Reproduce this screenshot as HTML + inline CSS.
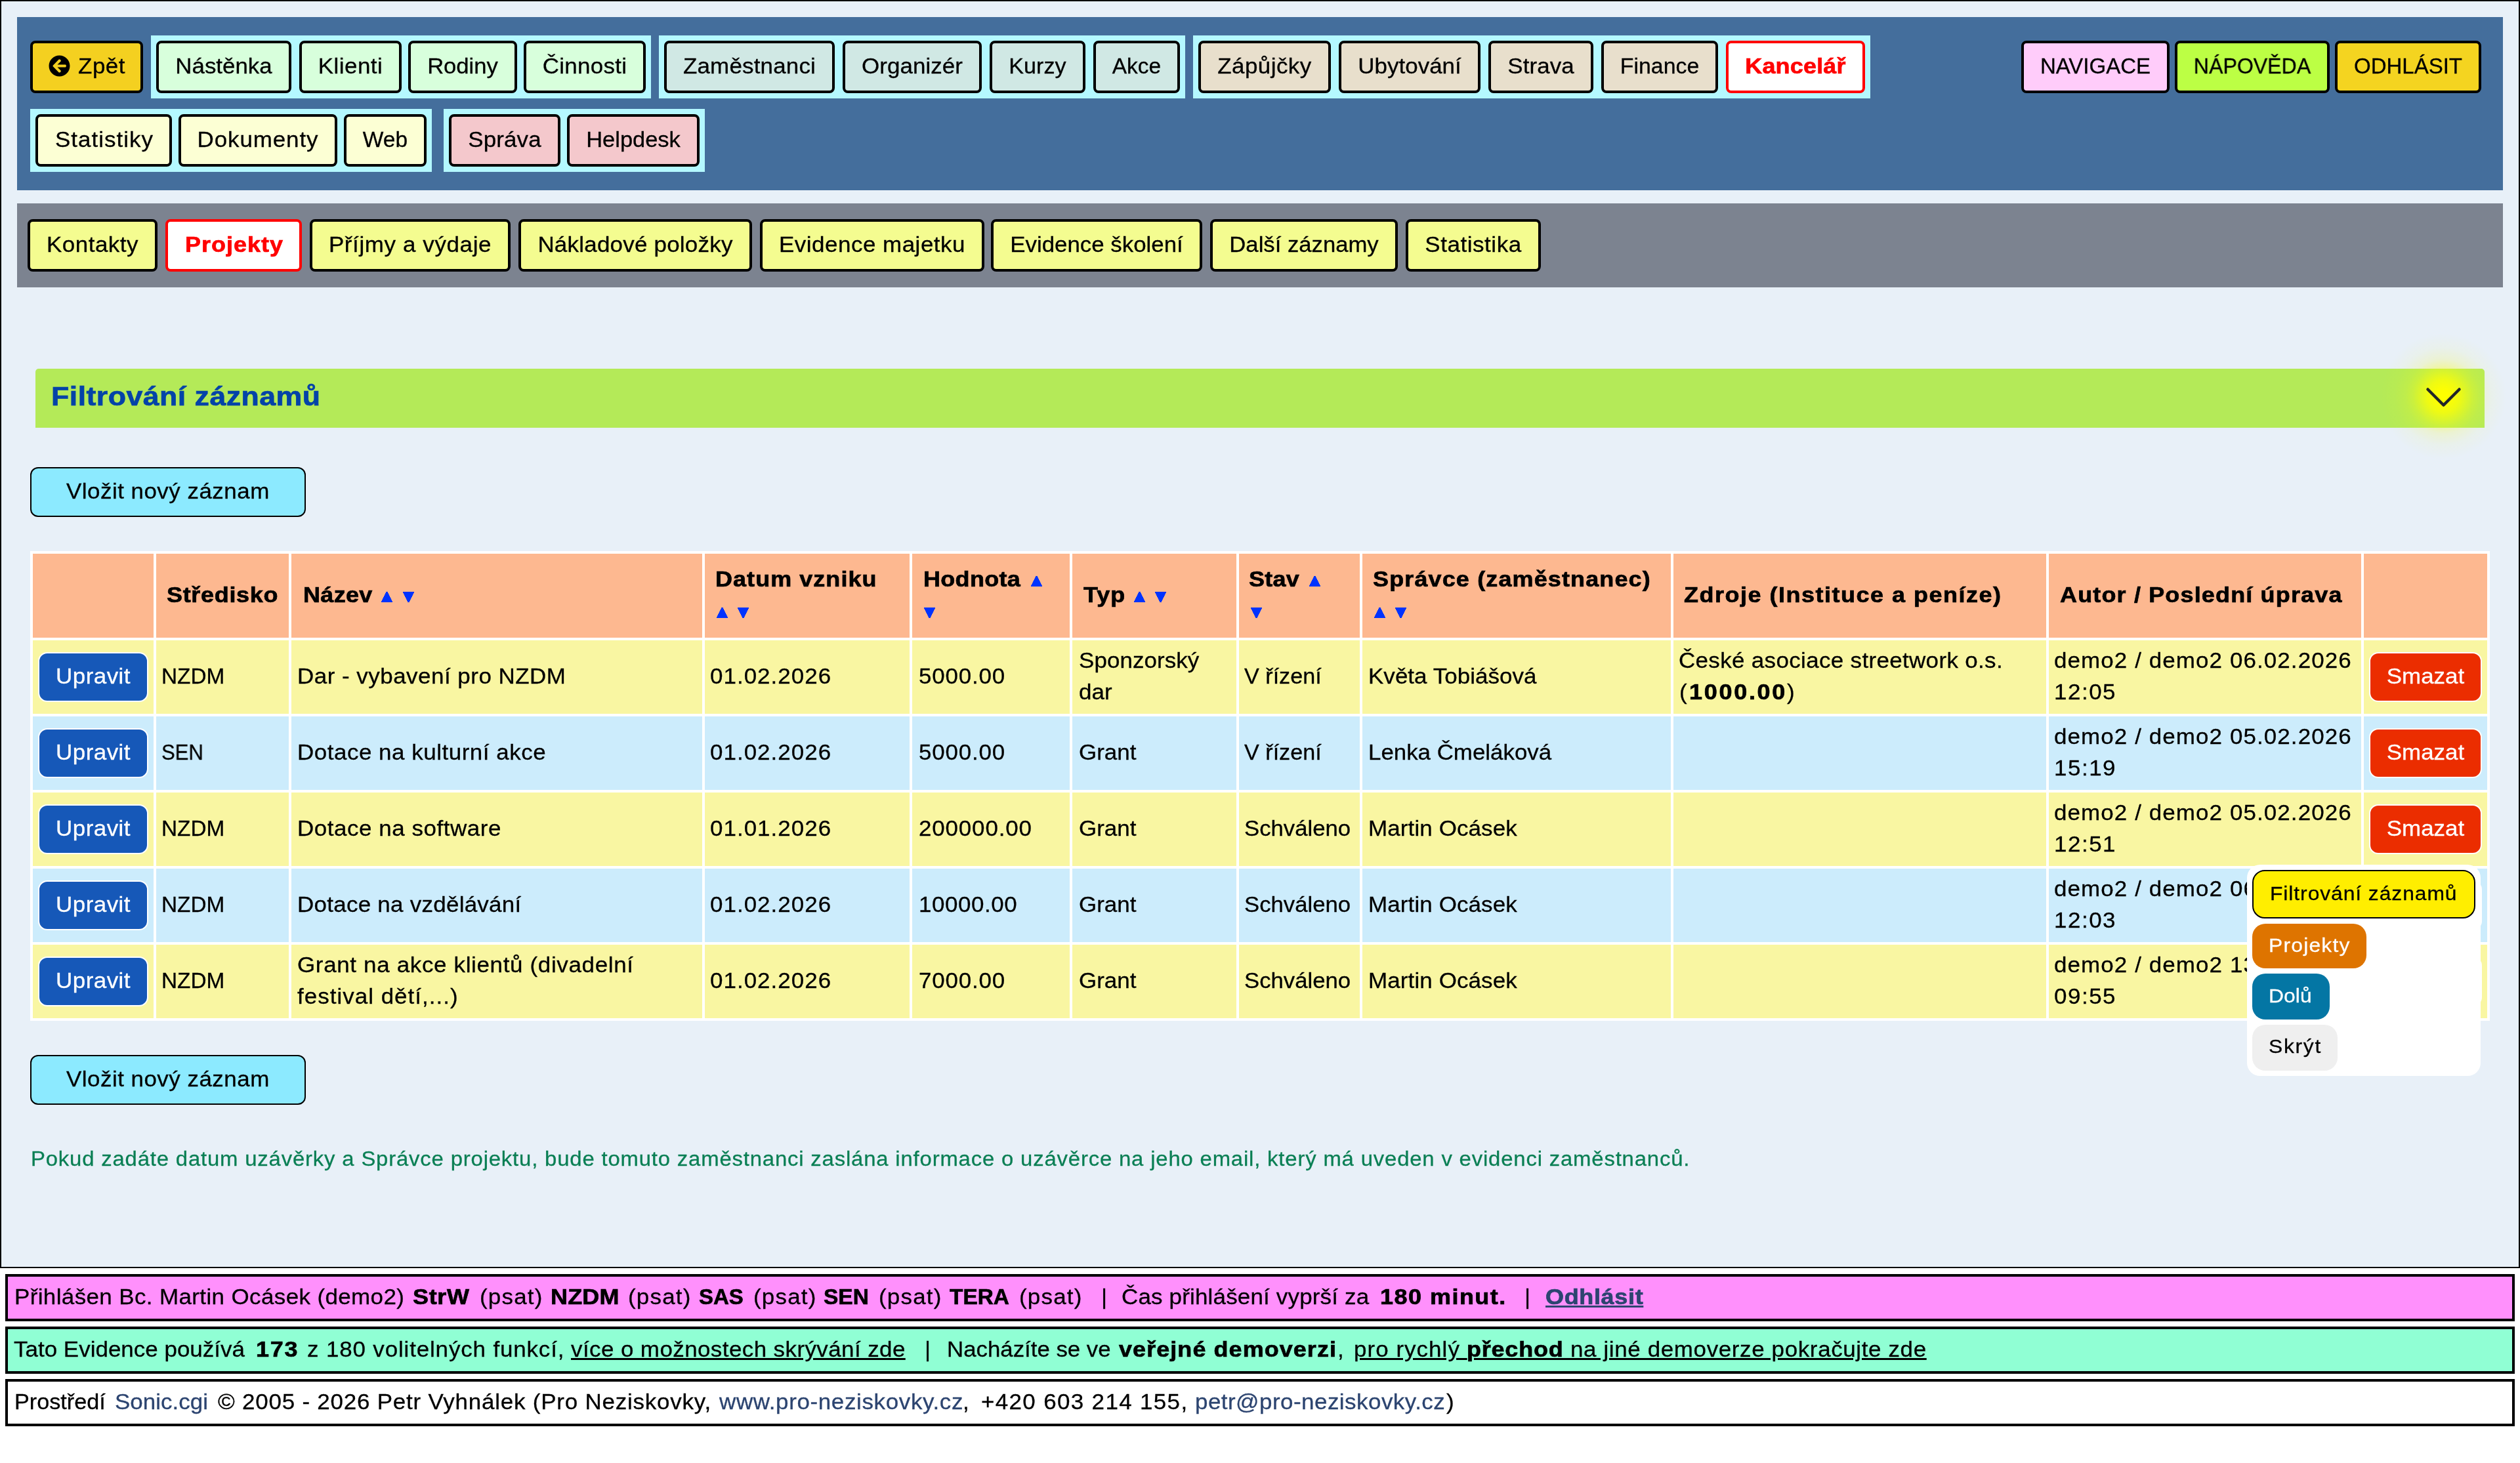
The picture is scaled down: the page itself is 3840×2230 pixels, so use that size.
<!DOCTYPE html>
<html lang="cs"><head><meta charset="utf-8"><title>Projekty</title>
<style>
html,body{margin:0;padding:0;background:#fff;}
body{width:3840px;height:2230px;position:relative;overflow:hidden;font-family:"Liberation Sans",sans-serif;color:#000;}
.b{position:absolute;box-sizing:content-box;}
.t{position:absolute;white-space:pre;-webkit-text-stroke:0.3px;will-change:transform;}
</style></head><body>
<div class="b" style="left:0;top:0;width:3836px;height:1929px;background:#e8f0f8;border:2px solid #000;"></div>
<div class="b" style="left:26px;top:26px;width:3788px;height:264px;background:#446e9c;"></div>
<div class="b" style="left:230px;top:54px;width:762px;height:96px;background:#b4f8ff;"></div>
<div class="b" style="left:1004px;top:54px;width:802px;height:96px;background:#b4f8ff;"></div>
<div class="b" style="left:1818px;top:54px;width:1032px;height:96px;background:#b4f8ff;"></div>
<div class="b" style="left:46px;top:166px;width:612px;height:96px;background:#b4f8ff;"></div>
<div class="b" style="left:676px;top:166px;width:398px;height:96px;background:#b4f8ff;"></div>
<div class="b" style="left:238px;top:62px;width:198px;height:72px;background:#d8ffdc;border:4px solid #000;border-radius:8px;"></div>
<div class="t" style="top:80.07px;font-size:33px;line-height:41px;letter-spacing:0.00px;color:#000;left:238.00px;width:206px;text-align:center;transform:scaleX(1.0571);transform-origin:50% 50%;">Nástěnka</div>
<div class="b" style="left:456px;top:62px;width:148px;height:72px;background:#d8ffdc;border:4px solid #000;border-radius:8px;"></div>
<div class="t" style="top:80.07px;font-size:33px;line-height:41px;letter-spacing:0.41px;color:#000;left:456.22px;width:156px;text-align:center;transform:scaleX(1.0600);transform-origin:50% 50%;">Klienti</div>
<div class="b" style="left:622px;top:62px;width:158px;height:72px;background:#d8ffdc;border:4px solid #000;border-radius:8px;"></div>
<div class="t" style="top:80.07px;font-size:33px;line-height:41px;letter-spacing:0.00px;color:#000;left:622.00px;width:166px;text-align:center;transform:scaleX(1.0485);transform-origin:50% 50%;">Rodiny</div>
<div class="b" style="left:798px;top:62px;width:178px;height:72px;background:#d8ffdc;border:4px solid #000;border-radius:8px;"></div>
<div class="t" style="top:80.07px;font-size:33px;line-height:41px;letter-spacing:0.25px;color:#000;left:798.13px;width:186px;text-align:center;transform:scaleX(1.0600);transform-origin:50% 50%;">Činnosti</div>
<div class="b" style="left:1012px;top:62px;width:252px;height:72px;background:#d0e8e4;border:4px solid #000;border-radius:8px;"></div>
<div class="t" style="top:80.07px;font-size:33px;line-height:41px;letter-spacing:0.16px;color:#000;left:1012.08px;width:260px;text-align:center;transform:scaleX(1.0600);transform-origin:50% 50%;">Zaměstnanci</div>
<div class="b" style="left:1284px;top:62px;width:204px;height:72px;background:#d0e8e4;border:4px solid #000;border-radius:8px;"></div>
<div class="t" style="top:80.07px;font-size:33px;line-height:41px;letter-spacing:0.04px;color:#000;left:1284.02px;width:212px;text-align:center;transform:scaleX(1.0600);transform-origin:50% 50%;">Organizér</div>
<div class="b" style="left:1508px;top:62px;width:138px;height:72px;background:#d0e8e4;border:4px solid #000;border-radius:8px;"></div>
<div class="t" style="top:80.07px;font-size:33px;line-height:41px;letter-spacing:0.00px;color:#000;left:1508.00px;width:146px;text-align:center;transform:scaleX(1.0353);transform-origin:50% 50%;">Kurzy</div>
<div class="b" style="left:1666px;top:62px;width:124px;height:72px;background:#d0e8e4;border:4px solid #000;border-radius:8px;"></div>
<div class="t" style="top:80.07px;font-size:33px;line-height:41px;letter-spacing:0.00px;color:#000;left:1666.00px;width:132px;text-align:center;transform:scaleX(1.0137);transform-origin:50% 50%;">Akce</div>
<div class="b" style="left:1826px;top:62px;width:194px;height:72px;background:#e8dfcc;border:4px solid #000;border-radius:8px;"></div>
<div class="t" style="top:80.07px;font-size:33px;line-height:41px;letter-spacing:0.41px;color:#000;left:1826.22px;width:202px;text-align:center;transform:scaleX(1.0600);transform-origin:50% 50%;">Zápůjčky</div>
<div class="b" style="left:2040px;top:62px;width:208px;height:72px;background:#e8dfcc;border:4px solid #000;border-radius:8px;"></div>
<div class="t" style="top:80.07px;font-size:33px;line-height:41px;letter-spacing:0.01px;color:#000;left:2040.00px;width:216px;text-align:center;transform:scaleX(1.0600);transform-origin:50% 50%;">Ubytování</div>
<div class="b" style="left:2268px;top:62px;width:152px;height:72px;background:#e8dfcc;border:4px solid #000;border-radius:8px;"></div>
<div class="t" style="top:80.07px;font-size:33px;line-height:41px;letter-spacing:0.05px;color:#000;left:2268.02px;width:160px;text-align:center;transform:scaleX(1.0600);transform-origin:50% 50%;">Strava</div>
<div class="b" style="left:2440px;top:62px;width:170px;height:72px;background:#e8dfcc;border:4px solid #000;border-radius:8px;"></div>
<div class="t" style="top:80.07px;font-size:33px;line-height:41px;letter-spacing:0.00px;color:#000;left:2440.00px;width:178px;text-align:center;transform:scaleX(1.0256);transform-origin:50% 50%;">Finance</div>
<div class="b" style="left:2630px;top:62px;width:204px;height:72px;background:#fff;border:4px solid #f00;border-radius:8px;"></div>
<div class="t" style="top:80.07px;font-size:33px;line-height:41px;letter-spacing:0.18px;font-weight:bold;-webkit-text-stroke:0.7px;color:#f00;left:2630.10px;width:212px;text-align:center;transform:scaleX(1.0900);transform-origin:50% 50%;">Kancelář</div>
<div class="b" style="left:3080px;top:62px;width:218px;height:72px;background:#ffccfa;border:4px solid #000;border-radius:8px;"></div>
<div class="t" style="top:80.07px;font-size:33px;line-height:41px;letter-spacing:0.00px;color:#000;left:3080.00px;width:226px;text-align:center;transform:scaleX(1.0000);transform-origin:50% 50%;">NAVIGACE</div>
<div class="b" style="left:3314px;top:62px;width:228px;height:72px;background:#bcff44;border:4px solid #000;border-radius:8px;"></div>
<div class="t" style="top:80.07px;font-size:33px;line-height:41px;letter-spacing:0.00px;color:#000;left:3314.00px;width:236px;text-align:center;transform:scaleX(0.9727);transform-origin:50% 50%;">NÁPOVĚDA</div>
<div class="b" style="left:3558px;top:62px;width:215px;height:72px;background:#f4d420;border:4px solid #000;border-radius:8px;"></div>
<div class="t" style="top:80.07px;font-size:33px;line-height:41px;letter-spacing:0.00px;color:#000;left:3558.00px;width:223px;text-align:center;transform:scaleX(1.0000);transform-origin:50% 50%;">ODHLÁSIT</div>
<div class="b" style="left:54px;top:174px;width:200px;height:72px;background:#fcffd4;border:4px solid #000;border-radius:8px;"></div>
<div class="t" style="top:192.07px;font-size:33px;line-height:41px;letter-spacing:0.95px;color:#000;left:54.50px;width:208px;text-align:center;transform:scaleX(1.0600);transform-origin:50% 50%;">Statistiky</div>
<div class="b" style="left:272px;top:174px;width:234px;height:72px;background:#fcffd4;border:4px solid #000;border-radius:8px;"></div>
<div class="t" style="top:192.07px;font-size:33px;line-height:41px;letter-spacing:0.82px;color:#000;left:272.44px;width:242px;text-align:center;transform:scaleX(1.0600);transform-origin:50% 50%;">Dokumenty</div>
<div class="b" style="left:524px;top:174px;width:118px;height:72px;background:#fcffd4;border:4px solid #000;border-radius:8px;"></div>
<div class="t" style="top:192.07px;font-size:33px;line-height:41px;letter-spacing:0.00px;color:#000;left:524.00px;width:126px;text-align:center;transform:scaleX(1.0149);transform-origin:50% 50%;">Web</div>
<div class="b" style="left:684px;top:174px;width:162px;height:72px;background:#f4c8cc;border:4px solid #000;border-radius:8px;"></div>
<div class="t" style="top:192.07px;font-size:33px;line-height:41px;letter-spacing:0.13px;color:#000;left:684.07px;width:170px;text-align:center;transform:scaleX(1.0600);transform-origin:50% 50%;">Správa</div>
<div class="b" style="left:864px;top:174px;width:194px;height:72px;background:#f4c8cc;border:4px solid #000;border-radius:8px;"></div>
<div class="t" style="top:192.07px;font-size:33px;line-height:41px;letter-spacing:0.00px;color:#000;left:864.00px;width:202px;text-align:center;transform:scaleX(1.0435);transform-origin:50% 50%;">Helpdesk</div>
<div class="b" style="left:46px;top:62px;width:164px;height:72px;background:#f4d020;border:4px solid #000;border-radius:8px;"></div>
<svg class="b" style="left:73.500px;top:83.500px" width="33" height="33" viewBox="0 0 512 512"><path fill="#000" d="M256 504C119 504 8 393 8 256S119 8 256 8s248 111 248 248-111 248-248 248zm28.9-143.6L209.4 288H392c13.3 0 24-10.700 24-24v-16c0-13.300-10.700-24-24-24H209.400l75.500-72.400c9.700-9.300 9.900-24.800.4-34.300l-11-10.900c-9.400-9.400-24.600-9.400-33.900 0L107.700 239c-9.400 9.400-9.400 24.600 0 33.900l132.700 132.700c9.400 9.400 24.600 9.400 33.900 0l11-10.900c9.500-9.500 9.300-25-.4-34.300z"/></svg>
<div class="t" style="top:80.07px;font-size:33px;line-height:41px;letter-spacing:0.48px;left:119.00px;transform:scaleX(1.0600);transform-origin:0 50%;">Zpět</div>
<div class="b" style="left:26px;top:310px;width:3788px;height:128px;background:#7c8390;"></div>
<div class="b" style="left:42px;top:334px;width:190px;height:72px;background:#f4fc90;border:4px solid #000;border-radius:8px;"></div>
<div class="t" style="top:352.07px;font-size:33px;line-height:41px;letter-spacing:0.44px;color:#000;left:42.23px;width:198px;text-align:center;transform:scaleX(1.0600);transform-origin:50% 50%;">Kontakty</div>
<div class="b" style="left:472px;top:334px;width:298px;height:72px;background:#f4fc90;border:4px solid #000;border-radius:8px;"></div>
<div class="t" style="top:352.07px;font-size:33px;line-height:41px;letter-spacing:0.57px;color:#000;left:472.30px;width:306px;text-align:center;transform:scaleX(1.0600);transform-origin:50% 50%;">Příjmy a výdaje</div>
<div class="b" style="left:790px;top:334px;width:348px;height:72px;background:#f4fc90;border:4px solid #000;border-radius:8px;"></div>
<div class="t" style="top:352.07px;font-size:33px;line-height:41px;letter-spacing:0.20px;color:#000;left:790.10px;width:356px;text-align:center;transform:scaleX(1.0600);transform-origin:50% 50%;">Nákladové položky</div>
<div class="b" style="left:1158px;top:334px;width:334px;height:72px;background:#f4fc90;border:4px solid #000;border-radius:8px;"></div>
<div class="t" style="top:352.07px;font-size:33px;line-height:41px;letter-spacing:0.46px;color:#000;left:1158.24px;width:342px;text-align:center;transform:scaleX(1.0600);transform-origin:50% 50%;">Evidence majetku</div>
<div class="b" style="left:1510px;top:334px;width:314px;height:72px;background:#f4fc90;border:4px solid #000;border-radius:8px;"></div>
<div class="t" style="top:352.07px;font-size:33px;line-height:41px;letter-spacing:0.00px;color:#000;left:1510.00px;width:322px;text-align:center;transform:scaleX(1.0560);transform-origin:50% 50%;">Evidence školení</div>
<div class="b" style="left:1844px;top:334px;width:278px;height:72px;background:#f4fc90;border:4px solid #000;border-radius:8px;"></div>
<div class="t" style="top:352.07px;font-size:33px;line-height:41px;letter-spacing:0.00px;color:#000;left:1844.00px;width:286px;text-align:center;transform:scaleX(1.0507);transform-origin:50% 50%;">Další záznamy</div>
<div class="b" style="left:2142px;top:334px;width:198px;height:72px;background:#f4fc90;border:4px solid #000;border-radius:8px;"></div>
<div class="t" style="top:352.07px;font-size:33px;line-height:41px;letter-spacing:0.51px;color:#000;left:2142.27px;width:206px;text-align:center;transform:scaleX(1.0600);transform-origin:50% 50%;">Statistika</div>
<div class="b" style="left:252px;top:334px;width:200px;height:72px;background:#fff;border:4px solid #f00;border-radius:8px;"></div>
<div class="t" style="top:352.07px;font-size:33px;line-height:41px;letter-spacing:0.94px;font-weight:bold;-webkit-text-stroke:0.7px;color:#f00;left:252.51px;width:208px;text-align:center;transform:scaleX(1.0900);transform-origin:50% 50%;">Projekty</div>
<div class="b" style="left:54px;top:562px;width:3732px;height:90px;background:#b4ea58;border-radius:5px 5px 0 0;"></div>
<div class="b" style="left:3623px;top:504px;width:200px;height:200px;background:radial-gradient(circle closest-side,rgba(255,255,0,1) 0%,rgba(255,255,0,1) 8%,rgba(255,255,0,.78) 25%,rgba(255,255,0,.52) 36%,rgba(255,255,0,.3) 46%,rgba(255,255,0,.15) 57%,rgba(255,255,0,.05) 74%,rgba(255,255,0,0) 96%);"></div>
<svg class="b" style="left:3683px;top:574px" width="80" height="60" viewBox="0 0 80 60"><path d="M16.500 19.500 L40.500 43.500 L64.500 19.500" fill="none" stroke="#212529" stroke-width="4.500" stroke-linecap="round" stroke-linejoin="round"/></svg>
<div class="t" style="top:579.79px;font-size:41px;line-height:49px;letter-spacing:0.42px;font-weight:bold;-webkit-text-stroke:0.7px;color:#0443a8;left:78.00px;transform:scaleX(1.0900);transform-origin:0 50%;">Filtrování záznamů</div>
<div class="b" style="left:46px;top:712px;width:416px;height:72px;background:#8ceaff;border:2px solid #000;border-radius:12px;"></div>
<div class="t" style="top:728.07px;font-size:33px;line-height:41px;letter-spacing:0.44px;left:101.00px;transform:scaleX(1.0600);transform-origin:0 50%;">Vložit nový záznam</div>
<div class="b" style="left:46px;top:1608px;width:416px;height:72px;background:#8ceaff;border:2px solid #000;border-radius:12px;"></div>
<div class="t" style="top:1624.07px;font-size:33px;line-height:41px;letter-spacing:0.44px;left:101.00px;transform:scaleX(1.0600);transform-origin:0 50%;">Vložit nový záznam</div>
<div class="b" style="left:46px;top:840px;width:3748px;height:716px;background:#fff;"></div>
<div class="b" style="left:50px;top:844px;width:184px;height:128px;background:#fdb890;"></div>
<div class="b" style="left:238px;top:844px;width:202px;height:128px;background:#fdb890;"></div>
<div class="b" style="left:444px;top:844px;width:626px;height:128px;background:#fdb890;"></div>
<div class="b" style="left:1074px;top:844px;width:312px;height:128px;background:#fdb890;"></div>
<div class="b" style="left:1390px;top:844px;width:240px;height:128px;background:#fdb890;"></div>
<div class="b" style="left:1634px;top:844px;width:250px;height:128px;background:#fdb890;"></div>
<div class="b" style="left:1888px;top:844px;width:184px;height:128px;background:#fdb890;"></div>
<div class="b" style="left:2076px;top:844px;width:470px;height:128px;background:#fdb890;"></div>
<div class="b" style="left:2550px;top:844px;width:568px;height:128px;background:#fdb890;"></div>
<div class="b" style="left:3122px;top:844px;width:476px;height:128px;background:#fdb890;"></div>
<div class="b" style="left:3602px;top:844px;width:188px;height:128px;background:#fdb890;"></div>
<div class="b" style="left:50px;top:976px;width:184px;height:112px;background:#f9f6a2;"></div>
<div class="b" style="left:238px;top:976px;width:202px;height:112px;background:#f9f6a2;"></div>
<div class="b" style="left:444px;top:976px;width:626px;height:112px;background:#f9f6a2;"></div>
<div class="b" style="left:1074px;top:976px;width:312px;height:112px;background:#f9f6a2;"></div>
<div class="b" style="left:1390px;top:976px;width:240px;height:112px;background:#f9f6a2;"></div>
<div class="b" style="left:1634px;top:976px;width:250px;height:112px;background:#f9f6a2;"></div>
<div class="b" style="left:1888px;top:976px;width:184px;height:112px;background:#f9f6a2;"></div>
<div class="b" style="left:2076px;top:976px;width:470px;height:112px;background:#f9f6a2;"></div>
<div class="b" style="left:2550px;top:976px;width:568px;height:112px;background:#f9f6a2;"></div>
<div class="b" style="left:3122px;top:976px;width:476px;height:112px;background:#f9f6a2;"></div>
<div class="b" style="left:3602px;top:976px;width:188px;height:112px;background:#f9f6a2;"></div>
<div class="b" style="left:50px;top:1092px;width:184px;height:112px;background:#ccecfc;"></div>
<div class="b" style="left:238px;top:1092px;width:202px;height:112px;background:#ccecfc;"></div>
<div class="b" style="left:444px;top:1092px;width:626px;height:112px;background:#ccecfc;"></div>
<div class="b" style="left:1074px;top:1092px;width:312px;height:112px;background:#ccecfc;"></div>
<div class="b" style="left:1390px;top:1092px;width:240px;height:112px;background:#ccecfc;"></div>
<div class="b" style="left:1634px;top:1092px;width:250px;height:112px;background:#ccecfc;"></div>
<div class="b" style="left:1888px;top:1092px;width:184px;height:112px;background:#ccecfc;"></div>
<div class="b" style="left:2076px;top:1092px;width:470px;height:112px;background:#ccecfc;"></div>
<div class="b" style="left:2550px;top:1092px;width:568px;height:112px;background:#ccecfc;"></div>
<div class="b" style="left:3122px;top:1092px;width:476px;height:112px;background:#ccecfc;"></div>
<div class="b" style="left:3602px;top:1092px;width:188px;height:112px;background:#ccecfc;"></div>
<div class="b" style="left:50px;top:1208px;width:184px;height:112px;background:#f9f6a2;"></div>
<div class="b" style="left:238px;top:1208px;width:202px;height:112px;background:#f9f6a2;"></div>
<div class="b" style="left:444px;top:1208px;width:626px;height:112px;background:#f9f6a2;"></div>
<div class="b" style="left:1074px;top:1208px;width:312px;height:112px;background:#f9f6a2;"></div>
<div class="b" style="left:1390px;top:1208px;width:240px;height:112px;background:#f9f6a2;"></div>
<div class="b" style="left:1634px;top:1208px;width:250px;height:112px;background:#f9f6a2;"></div>
<div class="b" style="left:1888px;top:1208px;width:184px;height:112px;background:#f9f6a2;"></div>
<div class="b" style="left:2076px;top:1208px;width:470px;height:112px;background:#f9f6a2;"></div>
<div class="b" style="left:2550px;top:1208px;width:568px;height:112px;background:#f9f6a2;"></div>
<div class="b" style="left:3122px;top:1208px;width:476px;height:112px;background:#f9f6a2;"></div>
<div class="b" style="left:3602px;top:1208px;width:188px;height:112px;background:#f9f6a2;"></div>
<div class="b" style="left:50px;top:1324px;width:184px;height:112px;background:#ccecfc;"></div>
<div class="b" style="left:238px;top:1324px;width:202px;height:112px;background:#ccecfc;"></div>
<div class="b" style="left:444px;top:1324px;width:626px;height:112px;background:#ccecfc;"></div>
<div class="b" style="left:1074px;top:1324px;width:312px;height:112px;background:#ccecfc;"></div>
<div class="b" style="left:1390px;top:1324px;width:240px;height:112px;background:#ccecfc;"></div>
<div class="b" style="left:1634px;top:1324px;width:250px;height:112px;background:#ccecfc;"></div>
<div class="b" style="left:1888px;top:1324px;width:184px;height:112px;background:#ccecfc;"></div>
<div class="b" style="left:2076px;top:1324px;width:470px;height:112px;background:#ccecfc;"></div>
<div class="b" style="left:2550px;top:1324px;width:568px;height:112px;background:#ccecfc;"></div>
<div class="b" style="left:3122px;top:1324px;width:476px;height:112px;background:#ccecfc;"></div>
<div class="b" style="left:3602px;top:1324px;width:188px;height:112px;background:#ccecfc;"></div>
<div class="b" style="left:50px;top:1440px;width:184px;height:112px;background:#f9f6a2;"></div>
<div class="b" style="left:238px;top:1440px;width:202px;height:112px;background:#f9f6a2;"></div>
<div class="b" style="left:444px;top:1440px;width:626px;height:112px;background:#f9f6a2;"></div>
<div class="b" style="left:1074px;top:1440px;width:312px;height:112px;background:#f9f6a2;"></div>
<div class="b" style="left:1390px;top:1440px;width:240px;height:112px;background:#f9f6a2;"></div>
<div class="b" style="left:1634px;top:1440px;width:250px;height:112px;background:#f9f6a2;"></div>
<div class="b" style="left:1888px;top:1440px;width:184px;height:112px;background:#f9f6a2;"></div>
<div class="b" style="left:2076px;top:1440px;width:470px;height:112px;background:#f9f6a2;"></div>
<div class="b" style="left:2550px;top:1440px;width:568px;height:112px;background:#f9f6a2;"></div>
<div class="b" style="left:3122px;top:1440px;width:476px;height:112px;background:#f9f6a2;"></div>
<div class="b" style="left:3602px;top:1440px;width:188px;height:112px;background:#f9f6a2;"></div>
<div class="t" style="top:886.07px;font-size:33px;line-height:41px;letter-spacing:0.63px;font-weight:bold;-webkit-text-stroke:0.7px;left:254.00px;transform:scaleX(1.0900);transform-origin:0 50%;">Středisko</div>
<div class="t" style="top:886.07px;font-size:33px;line-height:41px;letter-spacing:0.31px;font-weight:bold;-webkit-text-stroke:0.7px;left:462.00px;transform:scaleX(1.0900);transform-origin:0 50%;">Název</div>
<div class="t" style="top:862.07px;font-size:33px;line-height:41px;letter-spacing:0.97px;font-weight:bold;-webkit-text-stroke:0.7px;left:1090.00px;transform:scaleX(1.0900);transform-origin:0 50%;">Datum vzniku</div>
<div class="t" style="top:862.07px;font-size:33px;line-height:41px;letter-spacing:0.30px;font-weight:bold;-webkit-text-stroke:0.7px;left:1407.00px;transform:scaleX(1.0900);transform-origin:0 50%;">Hodnota</div>
<div class="t" style="top:886.07px;font-size:33px;line-height:41px;letter-spacing:0.90px;font-weight:bold;-webkit-text-stroke:0.7px;left:1651.00px;transform:scaleX(1.0900);transform-origin:0 50%;">Typ</div>
<div class="t" style="top:862.07px;font-size:33px;line-height:41px;letter-spacing:0.21px;font-weight:bold;-webkit-text-stroke:0.7px;left:1903.00px;transform:scaleX(1.0900);transform-origin:0 50%;">Stav</div>
<div class="t" style="top:862.07px;font-size:33px;line-height:41px;letter-spacing:1.05px;font-weight:bold;-webkit-text-stroke:0.7px;left:2092.00px;transform:scaleX(1.0900);transform-origin:0 50%;">Správce (zaměstnanec)</div>
<div class="t" style="top:886.07px;font-size:33px;line-height:41px;letter-spacing:1.39px;font-weight:bold;-webkit-text-stroke:0.7px;left:2566.00px;transform:scaleX(1.0900);transform-origin:0 50%;">Zdroje (Instituce a peníze)</div>
<div class="t" style="top:886.07px;font-size:33px;line-height:41px;letter-spacing:1.07px;font-weight:bold;-webkit-text-stroke:0.7px;left:3139.00px;transform:scaleX(1.0900);transform-origin:0 50%;">Autor / Poslední úprava</div>
<svg class="b" style="left:0;top:0" width="3840" height="1000" fill="#0033ff" shape-rendering="crispEdges"><rect x="588.0" y="902" width="3" height="2"/><rect x="587.0" y="904" width="5" height="2"/><rect x="586.0" y="906" width="7" height="2"/><rect x="585.0" y="908" width="9" height="2"/><rect x="584.0" y="910" width="11" height="2"/><rect x="583.0" y="912" width="13" height="2"/><rect x="582.0" y="914" width="15" height="2"/><rect x="581.0" y="916" width="17" height="2"/><rect x="621.0" y="916" width="3" height="2"/><rect x="620.0" y="914" width="5" height="2"/><rect x="619.0" y="912" width="7" height="2"/><rect x="618.0" y="910" width="9" height="2"/><rect x="617.0" y="908" width="11" height="2"/><rect x="616.0" y="906" width="13" height="2"/><rect x="615.0" y="904" width="15" height="2"/><rect x="614.0" y="902" width="17" height="2"/><rect x="1099.0" y="926" width="3" height="2"/><rect x="1098.0" y="928" width="5" height="2"/><rect x="1097.0" y="930" width="7" height="2"/><rect x="1096.0" y="932" width="9" height="2"/><rect x="1095.0" y="934" width="11" height="2"/><rect x="1094.0" y="936" width="13" height="2"/><rect x="1093.0" y="938" width="15" height="2"/><rect x="1092.0" y="940" width="17" height="2"/><rect x="1131.0" y="940" width="3" height="2"/><rect x="1130.0" y="938" width="5" height="2"/><rect x="1129.0" y="936" width="7" height="2"/><rect x="1128.0" y="934" width="9" height="2"/><rect x="1127.0" y="932" width="11" height="2"/><rect x="1126.0" y="930" width="13" height="2"/><rect x="1125.0" y="928" width="15" height="2"/><rect x="1124.0" y="926" width="17" height="2"/><rect x="1578.0" y="878" width="3" height="2"/><rect x="1577.0" y="880" width="5" height="2"/><rect x="1576.0" y="882" width="7" height="2"/><rect x="1575.0" y="884" width="9" height="2"/><rect x="1574.0" y="886" width="11" height="2"/><rect x="1573.0" y="888" width="13" height="2"/><rect x="1572.0" y="890" width="15" height="2"/><rect x="1571.0" y="892" width="17" height="2"/><rect x="1415.0" y="940" width="3" height="2"/><rect x="1414.0" y="938" width="5" height="2"/><rect x="1413.0" y="936" width="7" height="2"/><rect x="1412.0" y="934" width="9" height="2"/><rect x="1411.0" y="932" width="11" height="2"/><rect x="1410.0" y="930" width="13" height="2"/><rect x="1409.0" y="928" width="15" height="2"/><rect x="1408.0" y="926" width="17" height="2"/><rect x="1735.0" y="902" width="3" height="2"/><rect x="1734.0" y="904" width="5" height="2"/><rect x="1733.0" y="906" width="7" height="2"/><rect x="1732.0" y="908" width="9" height="2"/><rect x="1731.0" y="910" width="11" height="2"/><rect x="1730.0" y="912" width="13" height="2"/><rect x="1729.0" y="914" width="15" height="2"/><rect x="1728.0" y="916" width="17" height="2"/><rect x="1767.0" y="916" width="3" height="2"/><rect x="1766.0" y="914" width="5" height="2"/><rect x="1765.0" y="912" width="7" height="2"/><rect x="1764.0" y="910" width="9" height="2"/><rect x="1763.0" y="908" width="11" height="2"/><rect x="1762.0" y="906" width="13" height="2"/><rect x="1761.0" y="904" width="15" height="2"/><rect x="1760.0" y="902" width="17" height="2"/><rect x="2002.0" y="878" width="3" height="2"/><rect x="2001.0" y="880" width="5" height="2"/><rect x="2000.0" y="882" width="7" height="2"/><rect x="1999.0" y="884" width="9" height="2"/><rect x="1998.0" y="886" width="11" height="2"/><rect x="1997.0" y="888" width="13" height="2"/><rect x="1996.0" y="890" width="15" height="2"/><rect x="1995.0" y="892" width="17" height="2"/><rect x="1913.0" y="940" width="3" height="2"/><rect x="1912.0" y="938" width="5" height="2"/><rect x="1911.0" y="936" width="7" height="2"/><rect x="1910.0" y="934" width="9" height="2"/><rect x="1909.0" y="932" width="11" height="2"/><rect x="1908.0" y="930" width="13" height="2"/><rect x="1907.0" y="928" width="15" height="2"/><rect x="1906.0" y="926" width="17" height="2"/><rect x="2101.0" y="926" width="3" height="2"/><rect x="2100.0" y="928" width="5" height="2"/><rect x="2099.0" y="930" width="7" height="2"/><rect x="2098.0" y="932" width="9" height="2"/><rect x="2097.0" y="934" width="11" height="2"/><rect x="2096.0" y="936" width="13" height="2"/><rect x="2095.0" y="938" width="15" height="2"/><rect x="2094.0" y="940" width="17" height="2"/><rect x="2133.0" y="940" width="3" height="2"/><rect x="2132.0" y="938" width="5" height="2"/><rect x="2131.0" y="936" width="7" height="2"/><rect x="2130.0" y="934" width="9" height="2"/><rect x="2129.0" y="932" width="11" height="2"/><rect x="2128.0" y="930" width="13" height="2"/><rect x="2127.0" y="928" width="15" height="2"/><rect x="2126.0" y="926" width="17" height="2"/></svg>
<div class="b" style="left:58px;top:994px;width:164px;height:72px;background:#1658b8;border:2px solid #fff;border-radius:14px;"></div>
<div class="t" style="top:1010.07px;font-size:33px;line-height:41px;letter-spacing:0.42px;color:#fff;left:60.23px;width:164px;text-align:center;transform:scaleX(1.0600);transform-origin:50% 50%;">Upravit</div>
<div class="t" style="top:1010.07px;font-size:33px;line-height:41px;letter-spacing:0.00px;left:246.00px;transform:scaleX(1.0105);transform-origin:0 50%;">NZDM</div>
<div class="t" style="top:1010.07px;font-size:33px;line-height:41px;letter-spacing:0.45px;left:453.00px;transform:scaleX(1.0600);transform-origin:0 50%;">Dar - vybavení pro NZDM</div>
<div class="t" style="top:1010.07px;font-size:33px;line-height:41px;letter-spacing:0.95px;left:1082.00px;transform:scaleX(1.0600);transform-origin:0 50%;">01.02.2026</div>
<div class="t" style="top:1010.07px;font-size:33px;line-height:41px;letter-spacing:0.76px;left:1400.00px;transform:scaleX(1.0600);transform-origin:0 50%;">5000.00</div>
<div class="t" style="top:986.07px;font-size:33px;line-height:41px;letter-spacing:0.06px;left:1644.00px;transform:scaleX(1.0600);transform-origin:0 50%;">Sponzorský</div>
<div class="t" style="top:1034.07px;font-size:33px;line-height:41px;letter-spacing:0.06px;left:1644.00px;transform:scaleX(1.0600);transform-origin:0 50%;">dar</div>
<div class="t" style="top:1010.07px;font-size:33px;line-height:41px;letter-spacing:0.00px;left:1896.00px;transform:scaleX(1.0348);transform-origin:0 50%;">V řízení</div>
<div class="t" style="top:1010.07px;font-size:33px;line-height:41px;letter-spacing:0.03px;left:2085.00px;transform:scaleX(1.0600);transform-origin:0 50%;">Květa Tobiášová</div>
<div class="t" style="top:986.07px;font-size:33px;line-height:41px;letter-spacing:0.31px;left:2558.00px;transform:scaleX(1.0600);transform-origin:0 50%;">České asociace streetwork o.s.</div>
<div class="t" style="top:1034.07px;font-size:33px;line-height:41px;letter-spacing:0.63px;left:2559.00px;transform:scaleX(1.0600);transform-origin:0 50%;">(</div>
<div class="t" style="top:1034.07px;font-size:33px;line-height:41px;letter-spacing:2.49px;font-weight:bold;-webkit-text-stroke:0.7px;left:2574.00px;transform:scaleX(1.0900);transform-origin:0 50%;">1000.00</div>
<div class="t" style="top:1034.07px;font-size:33px;line-height:41px;letter-spacing:0.63px;left:2723.00px;transform:scaleX(1.0600);transform-origin:0 50%;">)</div>
<div class="t" style="top:986.07px;font-size:33px;line-height:41px;letter-spacing:1.02px;left:3130.00px;transform:scaleX(1.0600);transform-origin:0 50%;">demo2 / demo2 06.02.2026</div>
<div class="t" style="top:1034.07px;font-size:33px;line-height:41px;letter-spacing:1.42px;left:3130.00px;transform:scaleX(1.0600);transform-origin:0 50%;">12:05</div>
<div class="b" style="left:3610px;top:994px;width:168px;height:72px;background:#eb2d00;border:2px solid #fff;border-radius:14px;"></div>
<div class="t" style="top:1010.07px;font-size:33px;line-height:41px;letter-spacing:0.00px;color:#fff;left:3612.00px;width:168px;text-align:center;transform:scaleX(1.0589);transform-origin:50% 50%;">Smazat</div>
<div class="b" style="left:58px;top:1110px;width:164px;height:72px;background:#1658b8;border:2px solid #fff;border-radius:14px;"></div>
<div class="t" style="top:1126.07px;font-size:33px;line-height:41px;letter-spacing:0.42px;color:#fff;left:60.23px;width:164px;text-align:center;transform:scaleX(1.0600);transform-origin:50% 50%;">Upravit</div>
<div class="t" style="top:1126.07px;font-size:33px;line-height:41px;letter-spacing:0.00px;left:246.00px;transform:scaleX(0.9412);transform-origin:0 50%;">SEN</div>
<div class="t" style="top:1126.07px;font-size:33px;line-height:41px;letter-spacing:0.48px;left:453.00px;transform:scaleX(1.0600);transform-origin:0 50%;">Dotace na kulturní akce</div>
<div class="t" style="top:1126.07px;font-size:33px;line-height:41px;letter-spacing:0.95px;left:1082.00px;transform:scaleX(1.0600);transform-origin:0 50%;">01.02.2026</div>
<div class="t" style="top:1126.07px;font-size:33px;line-height:41px;letter-spacing:0.76px;left:1400.00px;transform:scaleX(1.0600);transform-origin:0 50%;">5000.00</div>
<div class="t" style="top:1126.07px;font-size:33px;line-height:41px;letter-spacing:0.00px;left:1644.00px;transform:scaleX(1.0600);transform-origin:0 50%;">Grant</div>
<div class="t" style="top:1126.07px;font-size:33px;line-height:41px;letter-spacing:0.00px;left:1896.00px;transform:scaleX(1.0348);transform-origin:0 50%;">V řízení</div>
<div class="t" style="top:1126.07px;font-size:33px;line-height:41px;letter-spacing:0.00px;left:2085.00px;transform:scaleX(1.0566);transform-origin:0 50%;">Lenka Čmeláková</div>
<div class="t" style="top:1102.07px;font-size:33px;line-height:41px;letter-spacing:1.02px;left:3130.00px;transform:scaleX(1.0600);transform-origin:0 50%;">demo2 / demo2 05.02.2026</div>
<div class="t" style="top:1150.07px;font-size:33px;line-height:41px;letter-spacing:1.42px;left:3130.00px;transform:scaleX(1.0600);transform-origin:0 50%;">15:19</div>
<div class="b" style="left:3610px;top:1110px;width:168px;height:72px;background:#eb2d00;border:2px solid #fff;border-radius:14px;"></div>
<div class="t" style="top:1126.07px;font-size:33px;line-height:41px;letter-spacing:0.00px;color:#fff;left:3612.00px;width:168px;text-align:center;transform:scaleX(1.0589);transform-origin:50% 50%;">Smazat</div>
<div class="b" style="left:58px;top:1226px;width:164px;height:72px;background:#1658b8;border:2px solid #fff;border-radius:14px;"></div>
<div class="t" style="top:1242.07px;font-size:33px;line-height:41px;letter-spacing:0.42px;color:#fff;left:60.23px;width:164px;text-align:center;transform:scaleX(1.0600);transform-origin:50% 50%;">Upravit</div>
<div class="t" style="top:1242.07px;font-size:33px;line-height:41px;letter-spacing:0.00px;left:246.00px;transform:scaleX(1.0105);transform-origin:0 50%;">NZDM</div>
<div class="t" style="top:1242.07px;font-size:33px;line-height:41px;letter-spacing:0.50px;left:453.00px;transform:scaleX(1.0600);transform-origin:0 50%;">Dotace na software</div>
<div class="t" style="top:1242.07px;font-size:33px;line-height:41px;letter-spacing:0.95px;left:1082.00px;transform:scaleX(1.0600);transform-origin:0 50%;">01.01.2026</div>
<div class="t" style="top:1242.07px;font-size:33px;line-height:41px;letter-spacing:0.78px;left:1400.00px;transform:scaleX(1.0600);transform-origin:0 50%;">200000.00</div>
<div class="t" style="top:1242.07px;font-size:33px;line-height:41px;letter-spacing:0.00px;left:1644.00px;transform:scaleX(1.0600);transform-origin:0 50%;">Grant</div>
<div class="t" style="top:1242.07px;font-size:33px;line-height:41px;letter-spacing:0.00px;left:1896.00px;transform:scaleX(1.0519);transform-origin:0 50%;">Schváleno</div>
<div class="t" style="top:1242.07px;font-size:33px;line-height:41px;letter-spacing:0.10px;left:2085.00px;transform:scaleX(1.0600);transform-origin:0 50%;">Martin Ocásek</div>
<div class="t" style="top:1218.07px;font-size:33px;line-height:41px;letter-spacing:1.02px;left:3130.00px;transform:scaleX(1.0600);transform-origin:0 50%;">demo2 / demo2 05.02.2026</div>
<div class="t" style="top:1266.07px;font-size:33px;line-height:41px;letter-spacing:1.42px;left:3130.00px;transform:scaleX(1.0600);transform-origin:0 50%;">12:51</div>
<div class="b" style="left:3610px;top:1226px;width:168px;height:72px;background:#eb2d00;border:2px solid #fff;border-radius:14px;"></div>
<div class="t" style="top:1242.07px;font-size:33px;line-height:41px;letter-spacing:0.00px;color:#fff;left:3612.00px;width:168px;text-align:center;transform:scaleX(1.0589);transform-origin:50% 50%;">Smazat</div>
<div class="b" style="left:58px;top:1342px;width:164px;height:72px;background:#1658b8;border:2px solid #fff;border-radius:14px;"></div>
<div class="t" style="top:1358.07px;font-size:33px;line-height:41px;letter-spacing:0.42px;color:#fff;left:60.23px;width:164px;text-align:center;transform:scaleX(1.0600);transform-origin:50% 50%;">Upravit</div>
<div class="t" style="top:1358.07px;font-size:33px;line-height:41px;letter-spacing:0.00px;left:246.00px;transform:scaleX(1.0105);transform-origin:0 50%;">NZDM</div>
<div class="t" style="top:1358.07px;font-size:33px;line-height:41px;letter-spacing:0.24px;left:453.00px;transform:scaleX(1.0600);transform-origin:0 50%;">Dotace na vzdělávání</div>
<div class="t" style="top:1358.07px;font-size:33px;line-height:41px;letter-spacing:0.95px;left:1082.00px;transform:scaleX(1.0600);transform-origin:0 50%;">01.02.2026</div>
<div class="t" style="top:1358.07px;font-size:33px;line-height:41px;letter-spacing:0.50px;left:1400.00px;transform:scaleX(1.0600);transform-origin:0 50%;">10000.00</div>
<div class="t" style="top:1358.07px;font-size:33px;line-height:41px;letter-spacing:0.00px;left:1644.00px;transform:scaleX(1.0600);transform-origin:0 50%;">Grant</div>
<div class="t" style="top:1358.07px;font-size:33px;line-height:41px;letter-spacing:0.00px;left:1896.00px;transform:scaleX(1.0519);transform-origin:0 50%;">Schváleno</div>
<div class="t" style="top:1358.07px;font-size:33px;line-height:41px;letter-spacing:0.10px;left:2085.00px;transform:scaleX(1.0600);transform-origin:0 50%;">Martin Ocásek</div>
<div class="t" style="top:1334.07px;font-size:33px;line-height:41px;letter-spacing:1.02px;left:3130.00px;transform:scaleX(1.0600);transform-origin:0 50%;">demo2 / demo2 06.02.2026</div>
<div class="t" style="top:1382.07px;font-size:33px;line-height:41px;letter-spacing:1.42px;left:3130.00px;transform:scaleX(1.0600);transform-origin:0 50%;">12:03</div>
<div class="b" style="left:3610px;top:1342px;width:168px;height:72px;background:#eb2d00;border:2px solid #fff;border-radius:14px;"></div>
<div class="t" style="top:1358.07px;font-size:33px;line-height:41px;letter-spacing:0.00px;color:#fff;left:3612.00px;width:168px;text-align:center;transform:scaleX(1.0589);transform-origin:50% 50%;">Smazat</div>
<div class="b" style="left:58px;top:1458px;width:164px;height:72px;background:#1658b8;border:2px solid #fff;border-radius:14px;"></div>
<div class="t" style="top:1474.07px;font-size:33px;line-height:41px;letter-spacing:0.42px;color:#fff;left:60.23px;width:164px;text-align:center;transform:scaleX(1.0600);transform-origin:50% 50%;">Upravit</div>
<div class="t" style="top:1474.07px;font-size:33px;line-height:41px;letter-spacing:0.00px;left:246.00px;transform:scaleX(1.0105);transform-origin:0 50%;">NZDM</div>
<div class="t" style="top:1450.07px;font-size:33px;line-height:41px;letter-spacing:0.61px;left:453.00px;transform:scaleX(1.0600);transform-origin:0 50%;">Grant na akce klientů (divadelní</div>
<div class="t" style="top:1498.07px;font-size:33px;line-height:41px;letter-spacing:0.95px;left:453.00px;transform:scaleX(1.0600);transform-origin:0 50%;">festival dětí,...)</div>
<div class="t" style="top:1474.07px;font-size:33px;line-height:41px;letter-spacing:0.95px;left:1082.00px;transform:scaleX(1.0600);transform-origin:0 50%;">01.02.2026</div>
<div class="t" style="top:1474.07px;font-size:33px;line-height:41px;letter-spacing:0.76px;left:1400.00px;transform:scaleX(1.0600);transform-origin:0 50%;">7000.00</div>
<div class="t" style="top:1474.07px;font-size:33px;line-height:41px;letter-spacing:0.00px;left:1644.00px;transform:scaleX(1.0600);transform-origin:0 50%;">Grant</div>
<div class="t" style="top:1474.07px;font-size:33px;line-height:41px;letter-spacing:0.00px;left:1896.00px;transform:scaleX(1.0519);transform-origin:0 50%;">Schváleno</div>
<div class="t" style="top:1474.07px;font-size:33px;line-height:41px;letter-spacing:0.10px;left:2085.00px;transform:scaleX(1.0600);transform-origin:0 50%;">Martin Ocásek</div>
<div class="t" style="top:1450.07px;font-size:33px;line-height:41px;letter-spacing:1.02px;left:3130.00px;transform:scaleX(1.0600);transform-origin:0 50%;">demo2 / demo2 13.01.2026</div>
<div class="t" style="top:1498.07px;font-size:33px;line-height:41px;letter-spacing:1.42px;left:3130.00px;transform:scaleX(1.0600);transform-origin:0 50%;">09:55</div>
<div class="b" style="left:3610px;top:1458px;width:168px;height:72px;background:#eb2d00;border:2px solid #fff;border-radius:14px;"></div>
<div class="t" style="top:1474.07px;font-size:33px;line-height:41px;letter-spacing:0.00px;color:#fff;left:3612.00px;width:168px;text-align:center;transform:scaleX(1.0589);transform-origin:50% 50%;">Smazat</div>
<div class="b" style="left:3424px;top:1318px;width:356px;height:322px;background:#fff;border-radius:20px;"></div>
<div class="b" style="left:3432px;top:1326px;width:336px;height:70px;background:#ffee00;border:2px solid #000;border-radius:19px;"></div>
<div class="t" style="top:1342.61px;font-size:30px;line-height:38px;letter-spacing:0.88px;left:3459.00px;transform:scaleX(1.0600);transform-origin:0 50%;">Filtrování záznamů</div>
<div class="b" style="left:3432px;top:1408px;width:174px;height:68px;background:#de7400;border-radius:20px;"></div>
<div class="t" style="top:1421.61px;font-size:30px;line-height:38px;letter-spacing:1.15px;color:#fff;left:3457.00px;transform:scaleX(1.0600);transform-origin:0 50%;">Projekty</div>
<div class="b" style="left:3432px;top:1484px;width:118px;height:70px;background:#0476a4;border-radius:20px;"></div>
<div class="t" style="top:1498.61px;font-size:30px;line-height:38px;letter-spacing:0.09px;color:#fff;left:3457.00px;transform:scaleX(1.0600);transform-origin:0 50%;">Dolů</div>
<div class="b" style="left:3432px;top:1562px;width:130px;height:70px;background:#efefef;border-radius:20px;"></div>
<div class="t" style="top:1575.61px;font-size:30px;line-height:38px;letter-spacing:1.62px;left:3457.00px;transform:scaleX(1.0600);transform-origin:0 50%;">Skrýt</div>
<div class="t" style="top:1746.76px;font-size:31px;line-height:39px;letter-spacing:0.78px;color:#0a7f54;left:47.00px;transform:scaleX(1.0600);transform-origin:0 50%;">Pokud zadáte datum uzávěrky a Správce projektu, bude tomuto zaměstnanci zaslána informace o uzávěrce na jeho email, který má uveden v evidenci zaměstnanců.</div>
<div class="b" style="left:8px;top:1942px;width:3816px;height:64px;background:#ff90fc;border:4px solid #000;"></div>
<div class="b" style="left:8px;top:2022px;width:3816px;height:64px;background:#90ffd4;border:4px solid #000;"></div>
<div class="b" style="left:8px;top:2102px;width:3816px;height:64px;background:#fff;border:4px solid #000;"></div>
<div class="t" style="top:1956.07px;font-size:33px;line-height:41px;letter-spacing:0.35px;left:22.00px;transform:scaleX(1.0600);transform-origin:0 50%;">Přihlášen Bc. Martin Ocásek (demo2)</div>
<div class="t" style="top:1956.07px;font-size:33px;line-height:41px;letter-spacing:0.61px;font-weight:bold;-webkit-text-stroke:0.7px;left:629.00px;transform:scaleX(1.0900);transform-origin:0 50%;">StrW</div>
<div class="t" style="top:1956.07px;font-size:33px;line-height:41px;letter-spacing:0.14px;font-weight:bold;-webkit-text-stroke:0.7px;left:839.00px;transform:scaleX(1.0900);transform-origin:0 50%;">NZDM</div>
<div class="t" style="top:1956.07px;font-size:33px;line-height:41px;letter-spacing:0.00px;font-weight:bold;-webkit-text-stroke:0.7px;left:1065.00px;transform:scaleX(1.0000);transform-origin:0 50%;">SAS</div>
<div class="t" style="top:1956.07px;font-size:33px;line-height:41px;letter-spacing:0.00px;font-weight:bold;-webkit-text-stroke:0.7px;left:1255.00px;transform:scaleX(1.0147);transform-origin:0 50%;">SEN</div>
<div class="t" style="top:1956.07px;font-size:33px;line-height:41px;letter-spacing:0.00px;font-weight:bold;-webkit-text-stroke:0.7px;left:1447.00px;transform:scaleX(1.0111);transform-origin:0 50%;">TERA</div>
<div class="t" style="top:1956.07px;font-size:33px;line-height:41px;letter-spacing:1.12px;left:731.00px;transform:scaleX(1.0600);transform-origin:0 50%;">(psat)</div>
<div class="t" style="top:1956.07px;font-size:33px;line-height:41px;letter-spacing:1.12px;left:957.00px;transform:scaleX(1.0600);transform-origin:0 50%;">(psat)</div>
<div class="t" style="top:1956.07px;font-size:33px;line-height:41px;letter-spacing:1.12px;left:1148.00px;transform:scaleX(1.0600);transform-origin:0 50%;">(psat)</div>
<div class="t" style="top:1956.07px;font-size:33px;line-height:41px;letter-spacing:1.12px;left:1339.00px;transform:scaleX(1.0600);transform-origin:0 50%;">(psat)</div>
<div class="t" style="top:1956.07px;font-size:33px;line-height:41px;letter-spacing:1.12px;left:1553.00px;transform:scaleX(1.0600);transform-origin:0 50%;">(psat)</div>
<div class="t" style="top:1956.07px;font-size:33px;line-height:41px;letter-spacing:0.63px;left:1678.00px;transform:scaleX(1.0600);transform-origin:0 50%;">|</div>
<div class="t" style="top:1956.07px;font-size:33px;line-height:41px;letter-spacing:0.63px;left:2323.00px;transform:scaleX(1.0600);transform-origin:0 50%;">|</div>
<div class="t" style="top:1956.07px;font-size:33px;line-height:41px;letter-spacing:0.16px;left:1709.00px;transform:scaleX(1.0600);transform-origin:0 50%;">Čas přihlášení vyprší za</div>
<div class="t" style="top:1956.07px;font-size:33px;line-height:41px;letter-spacing:1.36px;font-weight:bold;-webkit-text-stroke:0.7px;left:2102.60px;transform:scaleX(1.0900);transform-origin:0 50%;">180 minut.</div>
<div class="t" style="top:1956.07px;font-size:33px;line-height:41px;letter-spacing:0.62px;font-weight:bold;-webkit-text-stroke:0.7px;color:#2c4470;left:2355.40px;transform:scaleX(1.0900);transform-origin:0 50%;text-decoration:underline;">Odhlásit</div>
<div class="t" style="top:2036.07px;font-size:33px;line-height:41px;letter-spacing:0.00px;left:21.00px;transform:scaleX(1.0600);transform-origin:0 50%;">Tato Evidence používá</div>
<div class="t" style="top:2036.07px;font-size:33px;line-height:41px;letter-spacing:1.63px;font-weight:bold;-webkit-text-stroke:0.7px;left:389.50px;transform:scaleX(1.0900);transform-origin:0 50%;">173</div>
<div class="t" style="top:2036.07px;font-size:33px;line-height:41px;letter-spacing:0.79px;left:468.00px;transform:scaleX(1.0600);transform-origin:0 50%;">z 180 volitelných funkcí,</div>
<div class="t" style="top:2036.07px;font-size:33px;line-height:41px;letter-spacing:0.38px;left:870.00px;transform:scaleX(1.0600);transform-origin:0 50%;text-decoration:underline;">více o možnostech skrývání zde</div>
<div class="t" style="top:2036.07px;font-size:33px;line-height:41px;letter-spacing:0.63px;left:1409.00px;transform:scaleX(1.0600);transform-origin:0 50%;">|</div>
<div class="t" style="top:2036.07px;font-size:33px;line-height:41px;letter-spacing:0.00px;left:1443.00px;transform:scaleX(1.0549);transform-origin:0 50%;">Nacházíte se ve</div>
<div class="t" style="top:2036.07px;font-size:33px;line-height:41px;letter-spacing:0.98px;font-weight:bold;-webkit-text-stroke:0.7px;left:1705.40px;transform:scaleX(1.0900);transform-origin:0 50%;">veřejné demoverzi</div>
<div class="t" style="top:2036.07px;font-size:33px;line-height:41px;letter-spacing:0.63px;left:2038.00px;transform:scaleX(1.0600);transform-origin:0 50%;">,</div>
<div class="t" style="top:2036.07px;font-size:33px;line-height:41px;letter-spacing:0.97px;left:2063.40px;transform:scaleX(1.0600);transform-origin:0 50%;text-decoration:underline;">pro rychlý </div>
<div class="t" style="top:2036.07px;font-size:33px;line-height:41px;letter-spacing:0.73px;font-weight:bold;-webkit-text-stroke:0.7px;left:2235.00px;transform:scaleX(1.0900);transform-origin:0 50%;text-decoration:underline;">přechod </div>
<div class="t" style="top:2036.07px;font-size:33px;line-height:41px;letter-spacing:0.58px;left:2392.50px;transform:scaleX(1.0600);transform-origin:0 50%;text-decoration:underline;">na jiné demoverze pokračujte zde</div>
<div class="t" style="top:2116.07px;font-size:33px;line-height:41px;letter-spacing:0.00px;left:22.00px;transform:scaleX(1.0370);transform-origin:0 50%;">Prostředí</div>
<div class="t" style="top:2116.07px;font-size:33px;line-height:41px;letter-spacing:0.00px;color:#2c4470;left:175.00px;transform:scaleX(1.0597);transform-origin:0 50%;">Sonic.cgi</div>
<div class="t" style="top:2116.07px;font-size:33px;line-height:41px;letter-spacing:0.73px;left:332.00px;transform:scaleX(1.0600);transform-origin:0 50%;">© 2005 - 2026 Petr Vyhnálek (Pro Neziskovky,</div>
<div class="t" style="top:2116.07px;font-size:33px;line-height:41px;letter-spacing:0.59px;color:#2c4470;left:1096.06px;transform:scaleX(1.0600);transform-origin:0 50%;">www.pro-neziskovky.cz</div>
<div class="t" style="top:2116.07px;font-size:33px;line-height:41px;letter-spacing:0.63px;left:1467.00px;transform:scaleX(1.0600);transform-origin:0 50%;">,</div>
<div class="t" style="top:2116.07px;font-size:33px;line-height:41px;letter-spacing:1.26px;left:1495.00px;transform:scaleX(1.0600);transform-origin:0 50%;">+420 603 214 155,</div>
<div class="t" style="top:2116.07px;font-size:33px;line-height:41px;letter-spacing:0.43px;color:#2c4470;left:1821.00px;transform:scaleX(1.0600);transform-origin:0 50%;">petr@pro-neziskovky.cz</div>
<div class="t" style="top:2116.07px;font-size:33px;line-height:41px;letter-spacing:0.63px;left:2204.00px;transform:scaleX(1.0600);transform-origin:0 50%;">)</div>
</body></html>
